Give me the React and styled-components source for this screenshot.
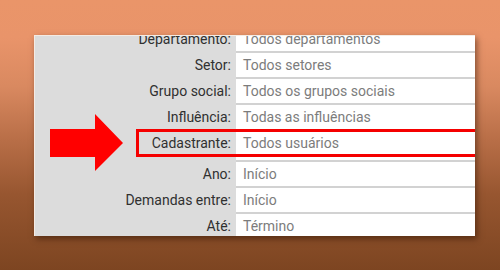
import React from "react";
import styled, { createGlobalStyle } from "styled-components";

const Global = createGlobalStyle`
  html, body { margin: 0; padding: 0; }
  body {
    width: 500px;
    height: 270px;
    overflow: hidden;
    font-family: Roboto, "Liberation Sans", Arial, sans-serif;
    background: linear-gradient(180deg, #ea9569 0%, #e9946a 14%, #d98960 32%, #b86e47 52%, #975630 72%, #7d4521 100%);
  }
`;

const Page = styled.div`
  padding: 35px 0 0 34px;
`;

const Panel = styled.div`
  position: relative;
  box-sizing: border-box;
  width: 441px;
  height: 201px;
  overflow: hidden;
  border-top: 1px solid #f4ebe4;
  border-left: 1px solid #f4ebe4;
  background: linear-gradient(to right, #dcdcdc 201px, #ffffff 201px);
  box-shadow: 2px 3px 6px rgba(40, 15, 0, 0.5);
`;

const List = styled.div`
  margin-top: -11px;
  display: flex;
  flex-direction: column;
`;

const Row = styled.div`
  display: grid;
  grid-template-columns: 201px 1fr;
  height: 26px;
`;

const Label = styled.div`
  box-sizing: border-box;
  padding-right: 5px;
  text-align: right;
  font-size: 14px;
  line-height: 24px;
  padding-top: 2px;
  color: #303030;
  white-space: nowrap;
`;

const Field = styled.div`
  box-sizing: border-box;
  border-top: 2px solid #d2d2d2;
  padding-left: 7px;
  font-size: 14px;
  line-height: 24px;
  color: #7c7c7c;
  white-space: nowrap;
`;

const Highlight = styled.div`
  position: relative;
  padding: 0 0 5px;
`;

const Frame = styled.div`
  position: absolute;
  top: 0;
  bottom: 3px;
  left: 101px;
  right: -20px;
  border: 3px solid #f50000;
`;

const Arrow = styled.svg`
  position: absolute;
  left: 15px;
  top: 78px;
`;

const rows = [
  ["Departamento:", "Todos departamentos"],
  ["Setor:", "Todos setores"],
  ["Grupo social:", "Todos os grupos sociais"],
  ["Influência:", "Todas as influências"],
  ["Cadastrante:", "Todos usuários", true],
  ["Ano:", "Início"],
  ["Demandas entre:", "Início"],
  ["Até:", "Término"],
];

export default function App() {
  return (
    <Page>
      <Global />
      <Panel>
        <List>
          {rows.map(([label, value, hl]) => {
            const row = (
              <Row key={label}>
                <Label>{label}</Label>
                <Field>{value}</Field>
              </Row>
            );
            return hl ? (
              <Highlight key={label}>
                {row}
                <Frame />
              </Highlight>
            ) : (
              row
            );
          })}
        </List>
        <Arrow width="74" height="58" viewBox="0 0 74 58">
          <path d="M0 15 H45 V0 L73 29 L45 57 V43 H0 Z" fill="#ff0000" />
        </Arrow>
      </Panel>
    </Page>
  );
}
